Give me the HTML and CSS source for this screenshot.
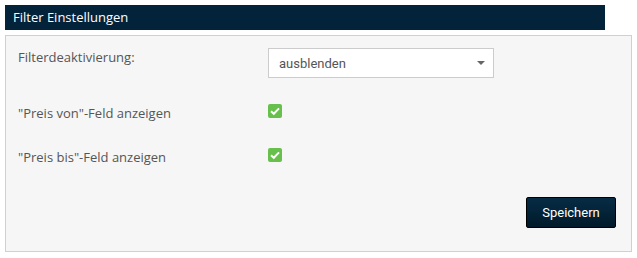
FILE: index.html
```html
<!DOCTYPE html>
<html lang="de">
<head>
  <meta charset="UTF-8" />
  <title>Filter Einstellungen</title>
  <link rel="stylesheet" href="styles.css">
</head>
<body>

<div class="title-bar">Filter Einstellungen</div>

<div class="panel">
  <div class="row">
    <div class="label">Filterdeaktivierung:</div>
    <div class="select">
      <span>ausblenden</span>
      <span class="caret"></span>
    </div>
  </div>

  <div class="row">
    <div class="label">"Preis von"-Feld anzeigen</div>
    <span class="check">
      <svg width="14" height="14" viewBox="0 0 14 14"><path d="M3 7.2 L5.8 9.8 L11 4.4" fill="none" stroke="#fff" stroke-width="2"/></svg>
    </span>
  </div>

  <div class="row">
    <div class="label">"Preis bis"-Feld anzeigen</div>
    <span class="check">
      <svg width="14" height="14" viewBox="0 0 14 14"><path d="M3 7.2 L5.8 9.8 L11 4.4" fill="none" stroke="#fff" stroke-width="2"/></svg>
    </span>
  </div>

  <div class="actions">
    <button class="save-btn">Speichern</button>
  </div>
</div>

</body>
</html>
```

FILE: styles.css
```css
body {
  margin: 5px;
  font-family: 'Open Sans', sans-serif;
  background: #fff;
}
.title-bar {
  width: 600px;
  height: 25px;
  box-sizing: border-box;
  padding: 0 8px;
  background: #03233a;
  color: #fff;
  font-size: 13px;
  line-height: 25px;
}
.panel {
  margin-top: 5px;
  width: 627px;
  height: 217px;
  box-sizing: border-box;
  border: 1px solid #d0d0d0;
  background: #f6f6f6;
  padding: 12px 15px 0 12px;
}
.row {
  display: flex;
  align-items: flex-start;
  margin-bottom: 26px;
}
.label {
  width: 250px;
  font-size: 13px;
  line-height: 18px;
  color: #555;
}
.select {
  width: 226px;
  height: 30px;
  box-sizing: border-box;
  border: 1px solid #ccc;
  background: #fff;
  display: flex;
  align-items: center;
  justify-content: space-between;
  padding: 0 8px 0 10px;
  font-family: Roboto, sans-serif;
  font-size: 13px;
  color: #555;
}
.caret {
  width: 0;
  height: 0;
  border-left: 4px solid transparent;
  border-right: 4px solid transparent;
  border-top: 4px solid #666;
}
.check {
  width: 14px;
  height: 14px;
  border-radius: 2px;
  background: #67bf4c;
  display: block;
}
.check svg {
  display: block;
}
.actions {
  display: flex;
  justify-content: flex-end;
  margin-top: 31px;
}
.save-btn {
  width: 90px;
  height: 31px;
  border: 1px solid #000;
  border-radius: 2px;
  background: linear-gradient(#062c45, #011a2a);
  color: #fff;
  font-family: Roboto, sans-serif;
  font-size: 13px;
}
```
